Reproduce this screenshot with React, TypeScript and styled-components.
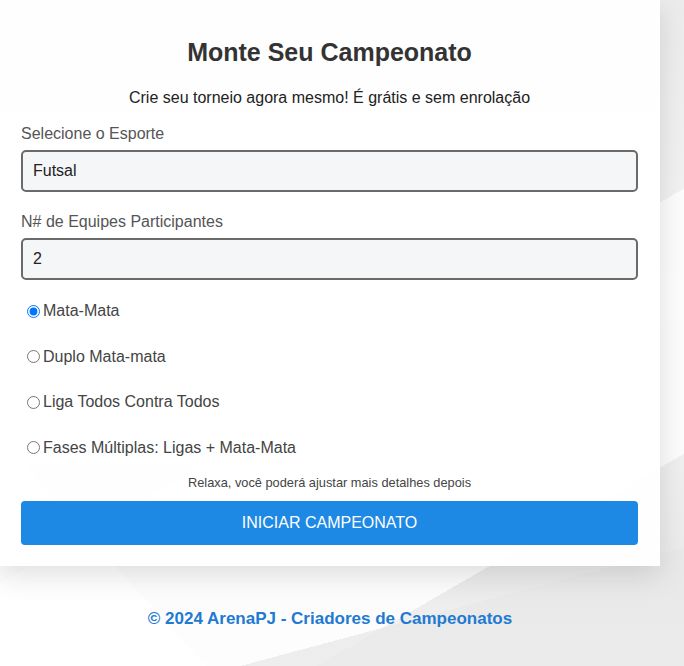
import React from "react";
import styled, { createGlobalStyle } from "styled-components";

const GlobalStyle = createGlobalStyle`
  html, body {
    margin: 0;
    padding: 0;
  }
  html {
    background: #f2f2f2;
  }
  body {
    min-height: 666px;
    font-family: "Liberation Sans", Arial, Helvetica, sans-serif;
    background-color: #f4f4f4;
    background-image:
      linear-gradient(165deg, transparent 0 86%, rgba(232,232,232,0.75) 86% 100%),
      linear-gradient(48deg, rgba(255,255,255,0.85) 0 16%, transparent 16% 100%),
      linear-gradient(150deg, transparent 0 55%, rgba(255,255,255,0.85) 55% 80%, transparent 80% 100%),
      linear-gradient(to bottom, #ececec 0%, #f5f5f5 45%, #ebebeb 88%, #f5f5f5 100%);
    background-repeat: no-repeat;
    background-size: 100% 666px;
  }
`;

const Page = styled.div`
  width: 660px;
  padding-bottom: 38px;
`;

const Card = styled.div`
  box-sizing: border-box;
  width: 660px;
  padding: 38px 22px 21px 21px;
  background: rgba(255, 255, 255, 0.94);
  box-shadow: 0 8px 28px rgba(0, 0, 0, 0.13);
  display: flex;
  flex-direction: column;
`;

const Title = styled.h2`
  margin: 0;
  font-size: 25px;
  line-height: 29px;
  font-weight: bold;
  color: #333;
  text-align: center;
`;

const Subtitle = styled.p`
  margin: 22px 0 0;
  font-size: 16px;
  line-height: 18px;
  color: #222;
  text-align: center;
`;

const Label = styled.label<{ $top: number }>`
  display: block;
  margin-top: ${(p) => p.$top}px;
  font-size: 16px;
  line-height: 18px;
  color: #555;
`;

const fieldCss = `
  box-sizing: border-box;
  width: 100%;
  height: 42px;
  margin-top: 7px;
  padding: 10px;
  border: 2px solid #6a6a6a;
  border-radius: 5px;
  background: #f5f6f8;
  font-family: "Liberation Sans", Arial, sans-serif;
  font-size: 16px;
  line-height: 18px;
  color: #222;
  outline: none;
`;

const Select = styled.select`
  ${fieldCss}
  appearance: none;
  -webkit-appearance: none;
`;

const NumberInput = styled.input`
  ${fieldCss}
  -moz-appearance: textfield;
  &::-webkit-outer-spin-button,
  &::-webkit-inner-spin-button {
    -webkit-appearance: none;
    margin: 0;
  }
`;

const Options = styled.div`
  display: flex;
  flex-direction: column;
  gap: 27.5px;
  margin-top: 22px;
`;

const Option = styled.label`
  display: flex;
  align-items: center;
  height: 18px;
  font-size: 16px;
  line-height: 18px;
  color: #444;
`;

const Radio = styled.input`
  width: 13px;
  height: 13px;
  margin: 0 3px 0 6px;
`;

const Note = styled.p`
  margin: 18px 0 0;
  font-size: 12.8px;
  line-height: 15px;
  color: #444;
  text-align: center;
`;

const StartButton = styled.button`
  box-sizing: border-box;
  width: 100%;
  height: 44px;
  margin-top: 11px;
  border: none;
  border-radius: 4px;
  background: #1e88e5;
  color: #fff;
  font-family: "Liberation Sans", Arial, sans-serif;
  font-size: 16px;
  font-weight: normal;
  text-transform: uppercase;
  cursor: pointer;
`;

const Footer = styled.footer`
  margin-top: 43px;
  font-size: 17px;
  line-height: 20px;
  font-weight: bold;
  color: #1e7ad2;
  text-align: center;
`;

const modes = [
  "Mata-Mata",
  "Duplo Mata-mata",
  "Liga Todos Contra Todos",
  "Fases Múltiplas: Ligas + Mata-Mata",
];

export default function App() {
  return (
    <>
      <GlobalStyle />
      <Page>
        <Card>
          <Title>Monte Seu Campeonato</Title>
          <Subtitle>Crie seu torneio agora mesmo! É grátis e sem enrolação</Subtitle>
          <Label $top={18} htmlFor="sport">Selecione o Esporte</Label>
          <Select id="sport" defaultValue="futsal">
            <option value="futsal">Futsal</option>
            <option value="futebol">Futebol</option>
            <option value="volei">Vôlei</option>
          </Select>
          <Label $top={21} htmlFor="teams">N# de Equipes Participantes</Label>
          <NumberInput id="teams" type="number" defaultValue={2} />
          <Options>
            {modes.map((m, i) => (
              <Option key={m}>
                <Radio type="radio" name="mode" defaultChecked={i === 0} />
                {m}
              </Option>
            ))}
          </Options>
          <Note>Relaxa, você poderá ajustar mais detalhes depois</Note>
          <StartButton>Iniciar Campeonato</StartButton>
        </Card>
        <Footer>© 2024 ArenaPJ - Criadores de Campeonatos</Footer>
      </Page>
    </>
  );
}
